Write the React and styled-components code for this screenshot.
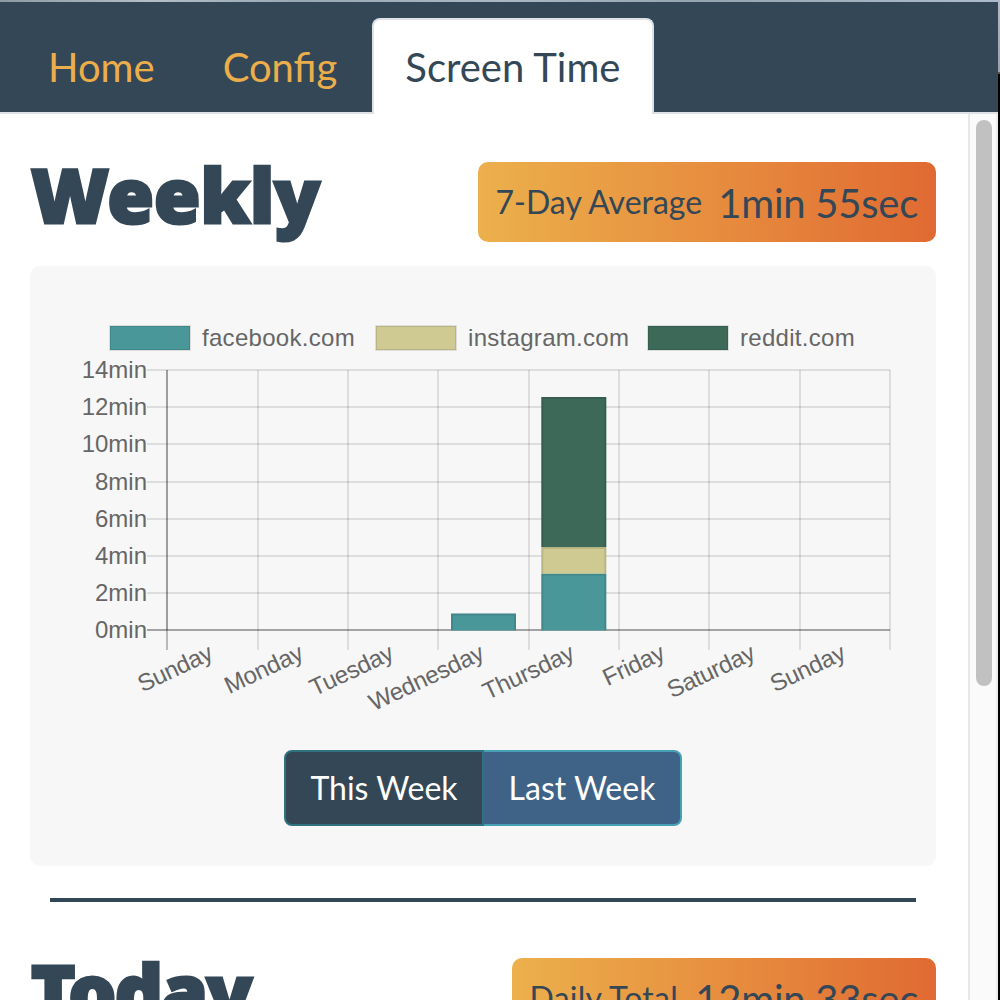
import React from "react";
import styled, { createGlobalStyle } from "styled-components";

const GlobalStyle = createGlobalStyle`
  * { box-sizing: border-box; }
  body { margin: 0; font-family: Lato, "Open Sans", sans-serif; color: #344756; }
`;

const Desktop = styled.div`
  width: 1000px;
  height: 1000px;
  padding: 2px 2px 0 0;
  overflow: hidden;
  background:
    linear-gradient(90deg, #8e9ba3, #b3bec7 15%, #98a8b3 30%, #aab8c3 50%, #94a5b0 70%, #adbccc) 0 0 / 1000px 2px no-repeat,
    linear-gradient(#b4bcc6, #999fac 72px, #5b5551 72px, #5b5551 74px, #000 74px);
`;

const Window = styled.div`
  height: 998px;
  display: flex;
  flex-direction: column;
  background: #fff;
`;

const Tabs = styled.nav`
  display: flex;
  flex: none;
  height: 112px;
  padding: 16px 14px 0;
  background: #344756;
  box-shadow: inset 0 -2px #dee2e6;
`;

const Tab = styled.a`
  height: 96px;
  margin-left: ${(p) => (p.$active ? 0.4 : 0)}px;
  padding: 16px 32px 16px ${(p) => (p.$active ? 31.6 : 32)}px;
  border: 2px solid ${(p) => (p.$active ? "#dee2e6" : "transparent")};
  border-bottom: 0;
  border-radius: 8px 8px 0 0;
  background: ${(p) => (p.$active ? "#fff" : "transparent")};
  color: ${(p) => (p.$active ? "#344756" : "#ecae4b")};
  font-size: 40px;
  line-height: 62px;
  white-space: nowrap;
`;

const Body = styled.div`
  display: flex;
  flex: 1;
  min-height: 0;
`;

const Content = styled.main`
  flex: 1;
  min-width: 0;
  padding: 48px 32px 0 30px;
  overflow: hidden;
`;

const ScrollTrack = styled.div`
  width: 30px;
  padding: 6px 4px 0 6px;
  border-left: 2px solid #e8e8e8;
  border-right: 2px solid #ededed;
  background: #fafafa;
`;

const ScrollThumb = styled.div`
  width: 16px;
  height: 566px;
  border-radius: 8px;
  background: #c1c1c1;
`;

const SectionHead = styled.header`
  display: flex;
  justify-content: space-between;
  height: 80px;
`;

const Title = styled.h1`
  margin: 0;
  padding-left: 1px;
  font-family: "Noto Sans", "Open Sans", sans-serif;
  font-size: 75px;
  font-weight: 900;
  line-height: 64px;
  letter-spacing: ${(p) => p.$tracking}px;
  -webkit-text-stroke: 3px #344756;
`;

const Badge = styled.div`
  display: flex;
  align-items: center;
  justify-content: space-between;
  width: ${(p) => p.$width}px;
  height: 80px;
  padding: 2px 18px 0 17.5px;
  border-radius: 10px;
  background: linear-gradient(to right, #ecb04c, #e78e3f 50%, #e06a32);
  white-space: nowrap;
`;

const BadgeLabel = styled.span`
  padding-bottom: 2px;
  font-size: 32px;
  line-height: 48px;
  letter-spacing: ${(p) => p.$tracking || 0}px;
`;

const BadgeValue = styled.span`
  font-size: 40px;
  line-height: 60px;
  letter-spacing: -0.25px;
`;

const Card = styled.section`
  display: flex;
  flex-direction: column;
  align-items: center;
  height: 600px;
  margin-top: 24px;
  padding: 30px;
  border-radius: 10px;
  background: #f7f7f7;
`;

const Chart = styled.svg`
  display: block;
  flex: none;
  width: 846px;
  height: 430px;
  font-family: "Liberation Sans", Arial, sans-serif;
  font-size: 24px;
  fill: #666;
`;

const LegendText = styled.text`
  letter-spacing: 0.3px;
`;

const DayText = styled.text`
  letter-spacing: -0.3px;
`;

const ButtonGroup = styled.div`
  display: flex;
  margin-top: 24px;
`;

const WeekButton = styled.button`
  width: 200px;
  height: 76px;
  padding: 0;
  border: 2px solid ${(p) => (p.$active ? "#307280" : "#48a0b6")};
  border-left-width: ${(p) => (p.$active ? 2 : 0)}px;
  border-radius: ${(p) => (p.$active ? "8px 0 0 8px" : "0 8px 8px 0")};
  background: ${(p) => (p.$active ? "#344756" : "#3f6387")};
  color: #fff;
  font: 32px/48px Lato, sans-serif;
  &:last-child { width: 198px; }
`;

const Divider = styled.hr`
  height: 4px;
  margin: 32px 20px 56px;
  border: 0;
  background: #344756;
`;

const TEAL = "#4a9799";
const SAND = "#cfca92";
const GREEN = "#3d6959";

const legend = [
  { name: "facebook.com", color: TEAL, x: 110 },
  { name: "instagram.com", color: SAND, x: 376 },
  { name: "reddit.com", color: GREEN, x: 648 },
];
const columns = [167, 258, 348, 438, 529, 619, 709, 800, 890];
const rows = [370, 407, 444, 482, 519, 556, 593, 630];
const days = ["Sunday", "Monday", "Tuesday", "Wednesday", "Thursday", "Friday", "Saturday", "Sunday"];
const bars = [
  { x: 451, y: 613.5, h: 17, color: TEAL },
  { x: 541.3, y: 573.5, h: 57, color: TEAL },
  { x: 541.3, y: 547, h: 26.5, color: SAND },
  { x: 541.3, y: 397, h: 150, color: GREEN },
];

function UsageChart() {
  return (
    <Chart viewBox="60 296 846 430">
      {legend.map((l) => (
        <g key={l.name}>
          <rect x={l.x} y="326" width="80" height="24" fill={l.color} stroke="#000" strokeOpacity="0.1" strokeWidth="2" />
          <LegendText x={l.x + 92} y="346">{l.name}</LegendText>
        </g>
      ))}
      {rows.map((y, i) => (
        <g key={y}>
          <path d={`M147 ${y}H890`} stroke="#000" strokeOpacity={i === 7 ? 0.34 : 0.1} strokeWidth="2" />
          <text x="147" y={y + 8} textAnchor="end">{`${14 - i * 2}min`}</text>
        </g>
      ))}
      {columns.map((x, i) => (
        <path key={x} d={`M${x} 370V650`} stroke="#000" strokeOpacity={i === 0 ? 0.25 : 0.1} strokeWidth="2" />
      ))}
      <path d="M167 370V630" stroke="#000" strokeOpacity="0.14" strokeWidth="2" />
      {bars.map((b) => (
        <g key={`${b.x}-${b.y}`}>
          <rect x={b.x} y={b.y} width="65" height={b.h} fill={b.color} />
          <path
            d={`M${b.x + 1} ${b.y + b.h}V${b.y + 1}H${b.x + 64}V${b.y + b.h}`}
            fill="none"
            stroke="#000"
            strokeOpacity="0.1"
            strokeWidth="2"
          />
        </g>
      ))}
      {days.map((d, i) => (
        <DayText key={i} textAnchor="end" transform={`translate(${214.4 + i * 90.37} 658.5) rotate(-25.3)`}>
          {d}
        </DayText>
      ))}
    </Chart>
  );
}

export default function App() {
  return (
    <>
      <GlobalStyle />
      <Desktop>
        <Window>
          <Tabs>
            <Tab>Home</Tab>
            <Tab>Config</Tab>
            <Tab $active>Screen Time</Tab>
          </Tabs>
          <Body>
            <Content>
              <SectionHead>
                <Title $tracking={0.1}>Weekly</Title>
                <Badge $width={458}>
                  <BadgeLabel>7-Day Average</BadgeLabel>
                  <BadgeValue>1min 55sec</BadgeValue>
                </Badge>
              </SectionHead>
              <Card>
                <UsageChart />
                <ButtonGroup>
                  <WeekButton $active>This Week</WeekButton>
                  <WeekButton>Last Week</WeekButton>
                </ButtonGroup>
              </Card>
              <Divider />
              <SectionHead>
                <Title $tracking={-1.6}>Today</Title>
                <Badge $width={424}>
                  <BadgeLabel $tracking={0.25}>Daily Total</BadgeLabel>
                  <BadgeValue>12min 33sec</BadgeValue>
                </Badge>
              </SectionHead>
            </Content>
            <ScrollTrack>
              <ScrollThumb />
            </ScrollTrack>
          </Body>
        </Window>
      </Desktop>
    </>
  );
}
